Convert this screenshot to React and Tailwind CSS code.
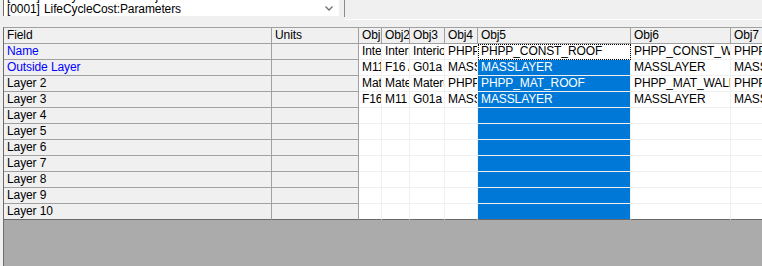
const cols = [
  { key: "field", label: "Field", w: "w-[268px]", fixed: true },
  { key: "units", label: "Units", w: "w-[87px]", fixed: true },
  { key: "o1", label: "Obj1", w: "w-[23px]" },
  { key: "o2", label: "Obj2", w: "w-[28px]" },
  { key: "o3", label: "Obj3", w: "w-[35px]" },
  { key: "o4", label: "Obj4", w: "w-[33px]" },
  { key: "o5", label: "Obj5", w: "w-[153px]", selected: true },
  { key: "o6", label: "Obj6", w: "w-[100px]" },
  { key: "o7", label: "Obj7", w: "w-[100px]" },
];

const rows = [
  { field: "Name", blue: true, o1: "Interior Ceiling", o2: "Interior Floor", o3: "Interior Wall", o4: "PHPP_CONST_FLOOR", o5: "PHPP_CONST_ROOF", o6: "PHPP_CONST_WALL", o7: "PHPP_CONST_DOOR" },
  { field: "Outside Layer", blue: true, o1: "M11 100mm lightweight", o2: "F16 Acoustic tile", o3: "G01a 19mm gypsum", o4: "MASSLAYER", o5: "MASSLAYER", o6: "MASSLAYER", o7: "MASSLAYER" },
  { field: "Layer 2", o1: "Material", o2: "Material", o3: "Material", o4: "PHPP_MAT_FLOOR", o5: "PHPP_MAT_ROOF", o6: "PHPP_MAT_WALL", o7: "PHPP_MAT_DOOR" },
  { field: "Layer 3", o1: "F16 Acoustic tile", o2: "M11 100mm lightweight", o3: "G01a 19mm gypsum", o4: "MASSLAYER", o5: "MASSLAYER", o6: "MASSLAYER", o7: "MASSLAYER" },
  { field: "Layer 4" },
  { field: "Layer 5" },
  { field: "Layer 6" },
  { field: "Layer 7" },
  { field: "Layer 8" },
  { field: "Layer 9" },
  { field: "Layer 10" },
];

const Cell = ({ col, row, last, rowIdx }) => {
  const value = row[col.key] || "";
  let cls = "h-[16px] shrink-0 overflow-hidden whitespace-nowrap leading-[15px] pl-[3px] border-r border-b ";
  if (col.fixed) {
    cls += "bg-[#f0f0f0] border-r-[#a0a0a0] ";
    cls += last ? "border-b-[#696969] " : "border-b-[#a0a0a0] ";
    cls += row.blue && col.key === "field" ? "text-[#0000ff] " : "text-black ";
  } else if (col.selected && rowIdx > 0) {
    cls += "bg-[#0078d7] text-white border-r-[#f0f0f0] ";
    cls += last ? "border-b-[#696969] " : "border-b-[#f0f0f0] ";
  } else {
    cls += "bg-white text-black border-r-[#f0f0f0] ";
    cls += last ? "border-b-[#696969] " : "border-b-[#f0f0f0] ";
  }
  if (col.selected && rowIdx === 0) {
    cls += "outline-1 outline-dotted outline-black -outline-offset-1 ";
  }
  return <div className={`${cls} ${col.w}`}>{value}</div>;
};

export default function App() {
  return (
    <div
      className="w-[762px] h-[266px] overflow-hidden bg-[#f0f0f0] flex flex-col text-[12px] tracking-[-0.1px] text-black"
      style={{ fontFamily: '"Liberation Sans", Arial, sans-serif' }}
    >
      {/* object list / combo area */}
      <div className="h-[27px] flex shrink-0">
        <div className="ml-[3px] w-[336px] h-[16px] bg-white border-l border-[#6d6d6d] overflow-hidden flex">
          <div className="flex-1 mt-[-10px] pl-[3px]">
            <div className="h-[13px] leading-[13px] whitespace-nowrap">
              <span className="inline-block w-[37px]">[0001]</span>LifeCycleCost:UseAdjustment
            </div>
            <div className="h-[13px] leading-[13px] whitespace-nowrap">
              <span className="inline-block w-[37px]">[0001]</span>LifeCycleCost:Parameters
            </div>
          </div>
          <div className="w-[20px] flex items-start pt-[6px] pl-[6px]">
            <svg width="8" height="5" viewBox="0 0 8 5">
              <path d="M0.5 0.5 L4 4 L7.5 0.5" fill="none" stroke="#707070" strokeWidth="1.3" />
            </svg>
          </div>
        </div>
        <div className="w-[5px]" />
        <div className="w-px h-[17px] bg-[#8a8a8a]" />
        <div className="flex-1 flex flex-col">
          <div className="h-[19px]" />
          <div className="h-px bg-white" />
        </div>
      </div>

      {/* grid */}
      <div className="ml-[3px] flex-1 bg-[#ababab] border-l border-t border-l-[#6d6d6d] border-t-[#a0a0a0] overflow-hidden">
        <div className="flex">
          {cols.map((c) => (
            <div
              key={c.key}
              className={`h-[16px] shrink-0 overflow-hidden whitespace-nowrap leading-[15px] pl-[3px] bg-[#f0f0f0] border-r border-b border-[#a0a0a0] ${c.w}`}
            >
              {c.label}
            </div>
          ))}
        </div>
        {rows.map((r, i) => (
          <div key={r.field} className="flex">
            {cols.map((c) => (
              <Cell key={c.key} col={c} row={r} rowIdx={i} last={i === rows.length - 1} />
            ))}
          </div>
        ))}
      </div>
    </div>
  );
}
